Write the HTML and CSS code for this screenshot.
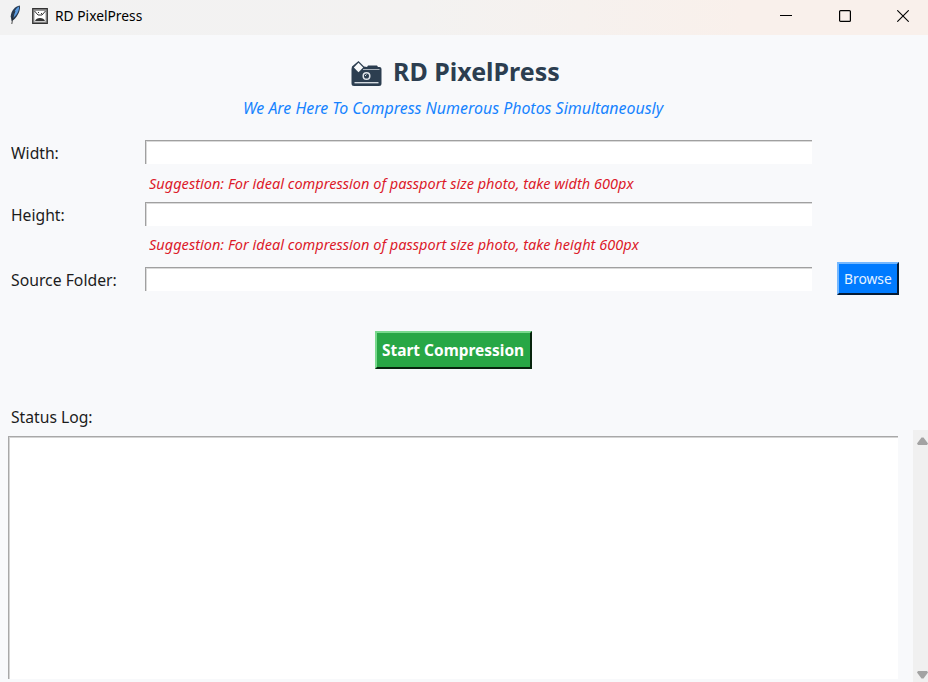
FILE: index.html
```
<!DOCTYPE html>
<html lang="en">
<head>
<meta charset="utf-8">
<title>RD PixelPress</title>
<link rel="stylesheet" href="styles.css">
</head>
<body>
<header class="titlebar">
  <svg class="feather" width="12" height="20" viewBox="0 0 12 20"><path d="M10.8 .5C6 1 2 6 1.7 11.5L2.6 16 4.5 15C9 11 11.8 5 10.8.5Z" fill="#26384f"/><path d="M10 1.5C7 3 4.5 7 4 13 8 10 10.5 5 10 1.5Z" fill="#5b9be0"/><path d="M6 6C4.5 10 3.5 14 2.8 19" fill="none" stroke="#222" stroke-width=".8"/></svg>
  <svg class="picture" width="16" height="16" viewBox="0 0 16 16"><path d="M.7.7h14.6v14.6H.7z" fill="#999" stroke="#333" stroke-width="1.2"/><path d="M2.5 3h11v10.5h-11z" fill="#fff"/><path d="M2.5 3l3.5 4h4l3.5-4" fill="none" stroke="#333"/><path d="M3 13c1-4 9-4 10 0z" fill="#333"/><path d="M6 4h1v1H6zm3 1h1v1H9z" fill="#333"/></svg>
  <span class="window-name"><span class="t">RD PixelPress</span></span>
  <div class="controls">
    <svg width="12" height="12" viewBox="0 0 12 12"><path d="M0 5.5h12" stroke="#000"/></svg>
    <svg width="12" height="12" viewBox="0 0 12 12"><rect x=".6" y=".6" width="10.8" height="10.8" rx="1" fill="none" stroke="#000" stroke-width="1.2"/></svg>
    <svg width="12" height="12" viewBox="0 0 12 12"><path d="M.3.3l11.4 11.4M11.7.3L.3 11.7" stroke="#000" stroke-width="1.1"/></svg>
  </div>
</header>
<main>
  <h1><svg width="31" height="26" viewBox="0 0 31 26"><path d="M1 5.5L7.5 0 13 5.5 16 6l1-1.5h9L27 6h1.5Q30.5 6 30.5 8v14.5q0 2.5-2.5 2.5H3Q.5 25 .5 22.5V8Z" fill="#2c3e50"/><path d="M7.5 1.7L12.2 6.5 7.5 11.3 2.8 6.5Z" fill="#f8f9fa"/><path d="M12 8.5h16.5" stroke="#a8b1ba"/><path d="M3.5 21.7h24" stroke="#dfe4e9" stroke-width="1.3"/><circle cx="15.5" cy="15" r="3.3" fill="none" stroke="#dfe4e9" stroke-width="1.5"/><path d="M14 15l1.5-1.5" stroke="#dfe4e9"/></svg><span class="t">RD PixelPress</span></h1>
  <p class="tagline"><span class="t">We Are Here To Compress Numerous Photos Simultaneously</span></p>
  <form class="form">
    <label for="w"><span class="t">Width:</span></label><input id="w" type="text">
    <p class="hint"><span class="t">Suggestion: For ideal compression of passport size photo, take width 600px</span></p>
    <label for="h"><span class="t">Height:</span></label><input id="h" type="text">
    <p class="hint"><span class="t">Suggestion: For ideal compression of passport size photo, take height 600px</span></p>
    <label for="s" class="source"><span class="t">Source Folder:</span></label><input id="s" type="text"><button type="button" class="browse"><span class="t">Browse</span></button>
  </form>
  <button type="button" class="start"><span class="t">Start Compression</span></button>
  <p class="log-label"><span class="t">Status Log:</span></p>
  <section class="log-row">
    <div class="log"></div>
    <div class="scrollbar"><svg width="11" height="8" viewBox="0 0 11 8"><path d="M4.5.5h2L11 6.5 10 8H1L0 6.5Z" fill="#a3a3a3"/></svg><svg width="11" height="8" viewBox="0 0 11 8"><path d="M4.5 7.5h2L11 1.5 10 0H1L0 1.5Z" fill="#a3a3a3"/></svg></div>
  </section>
</main>
</body>
</html>
```
FILE: styles.css
```
* { box-sizing: border-box; }
body { margin: 0; width: 928px; height: 682px; overflow: hidden; display: flex; flex-direction: column; background: #f8f9fb; color: #1c1c1c; font: 16px/22px "Noto Sans", "Open Sans", sans-serif; }
h1, p { margin: 0; font-weight: normal; }
.t { display: inline-block; white-space: nowrap; transform-origin: 0 50%; }
.titlebar { height: 35px; flex: none; display: flex; align-items: center; padding: 0 19px 4px 9px; background: linear-gradient(90deg, #f2f2f2 0%, #f3f2f1 45%, #f9f0eb 80%); }
.feather { margin-top: -2px; }
.picture { margin: 1px 7px 0 11px; }
.window-name { font-size: 14px; color: #000; width: 88px; }
.window-name .t { transform: scaleX(.985); }
.controls { margin-left: auto; display: flex; gap: 46.5px; }
main { flex: 1; display: flex; flex-direction: column; align-items: flex-start; }
h1 { display: flex; margin: 19px 0 0 351px; height: 34px; align-items: center; font-size: 25px; font-weight: 700; color: #2c3e50; }
h1 svg { margin: 5px 11px 0 0; }
.tagline { margin: 9px 0 0 243px; height: 22px; font-style: italic; color: #1683ff; }
.tagline .t { transform: scaleX(.995); }
.form { margin-top: 21px; display: grid; grid-template-columns: 134px 667px 62px; grid-template-rows: 24px 38px 24px 36px 33px; padding-left: 11px; align-items: center; }
.form label { grid-column: 1; padding-top: 2px; }
.form label .t, .log-label .t { transform: scaleX(.98); }
input { grid-column: 2; width: 667px; height: 24px; padding: 0 4px; border: 0; border-top: 1px solid #a0a0a0; border-left: 1px solid #a0a0a0; border-radius: 0; background: #fff; font: inherit; outline: 0; box-shadow: inset 1px 1px #dadada; }
.hint { grid-column: 2 / 4; padding-left: 4px; font-style: italic; font-size: 15px; color: #dc1a2a; }
.hint .t { transform: scaleX(.97); }
.form .source { padding-top: 3px; }
.form .source .t { transform: scaleX(.985); }
.browse { grid-column: 3; width: 62px; height: 33px; margin-left: 25px; padding: 0 0 2px 5px; border: 2px solid; border-color: #74b8ff #061c35 #061c35 #74b8ff; background: #007bff; color: #e6f2ff; font: 15px/22px "Noto Sans", sans-serif; text-align: left; }
.browse .t { transform: scaleX(.92); }
.start { margin: 36px 0 0 375px; width: 157px; height: 38px; padding: 0 0 0 5px; border: 2px solid; border-color: #79d98d #07240d #07240d #79d98d; background: #28a745; color: #fff; font: bold 16px/22px "Noto Sans", sans-serif; text-align: left; }
.start .t { transform: scaleX(.965); }
.log-label { margin: 37px 0 0 11px; height: 22px; }
.log-row { flex: 1; width: 100%; display: flex; justify-content: space-between; padding-left: 8px; margin-top: 2px; }
.log { width: 890px; height: 243px; margin-top: 6px; background: #fff; border-top: 1px solid #a8a8a8; border-left: 1px solid #a8a8a8; box-shadow: inset 1px 1px #d4d4d4; }
.scrollbar { width: 15px; background: #f0f0f0; display: flex; flex-direction: column; justify-content: space-between; padding: 7px 0 3px 4px; }
```
